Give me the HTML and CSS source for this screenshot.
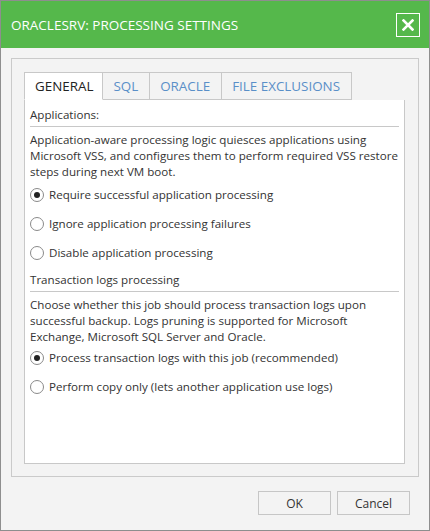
FILE: index.html
```html
<!DOCTYPE html>
<html>
<head>
<meta charset="utf-8">
<link rel="stylesheet" href="styles.css">
</head>
<body>
<div class="window">
  <div class="titlebar">
    <span class="title">ORACLESRV: PROCESSING SETTINGS</span>
    <span class="close">
      <svg width="12" height="12" viewBox="0 0 12 12"><path d="M1.5 1.5 L10.5 10.5 M10.5 1.5 L1.5 10.5" stroke="#fff" stroke-width="2.6" stroke-linecap="square"/></svg>
    </span>
  </div>
  <div class="content">
    <div class="group">
      <div class="tabs">
        <div class="tab active">GENERAL</div>
        <div class="tab">SQL</div>
        <div class="tab">ORACLE</div>
        <div class="tab">FILE EXCLUSIONS</div>
      </div>
      <div class="panel">
        <div class="section-title">Applications:</div>
        <p class="desc">Application-aware processing logic quiesces applications using<br>Microsoft VSS, and configures them to perform required VSS restore<br>steps during next VM boot.</p>
        <div class="radio checked"><span class="dot"></span>Require successful application processing</div>
        <div class="radio"><span class="dot"></span>Ignore application processing failures</div>
        <div class="radio"><span class="dot"></span>Disable application processing</div>
        <div class="section-title second">Transaction logs processing</div>
        <p class="desc desc2">Choose whether this job should process transaction logs upon<br>successful backup. Logs pruning is supported for Microsoft<br>Exchange, Microsoft SQL Server and Oracle.</p>
        <div class="radio checked"><span class="dot"></span>Process transaction logs with this job (recommended)</div>
        <div class="radio"><span class="dot"></span>Perform copy only (lets another application use logs)</div>
      </div>
    </div>
    <div class="buttons">
      <button class="btn">OK</button>
      <button class="btn">Cancel</button>
    </div>
  </div>
</div>
</body>
</html>
```

FILE: styles.css
```css
* { box-sizing: border-box; }
html, body { margin: 0; padding: 0; background: #fff; }
body { font-family: "Open Sans", "DejaVu Sans", sans-serif; font-size: 11.6px; color: #333; }
.window {
  width: 430px; height: 531px;
  border: 1px solid #8e8e8e;
  background: #f3f3f3;
  display: flex; flex-direction: column;
}
.titlebar {
  height: 47px; background: #55b84b;
  display: flex; align-items: center; justify-content: space-between;
  padding: 0 9px 0 10px;
}
.title { color: #fff; font-size: 13.5px; }
.close {
  width: 24px; height: 24px; border: 1px solid #fff;
  display: flex; align-items: center; justify-content: center;
}
.close svg { display: block; }
.content { flex: 1; padding: 10px 10px 0 10px; display: flex; flex-direction: column; }
.group {
  height: 419px;
  border: 1px solid #cacaca;
  padding: 13px 13px 12px 12px;
  display: flex; flex-direction: column;
}
.tabs { display: flex; height: 28px; }
.tab {
  height: 28px; padding: 0 11px 0 10px;
  border: 1px solid #c8c8c8; border-left: none;
  background: #f3f3f3; color: #5a8fc8;
  font-size: 13.4px; line-height: 27px;
}
.tab.active {
  border-left: 1px solid #c8c8c8;
  background: #fff; color: #222;
  border-bottom-color: #fff;
  padding: 0 9px 0 10px;
}
.panel {
  flex: 1; background: #fff;
  border: 1px solid #c8c8c8; border-top: none;
  padding: 6px 5px 0 5px;
}
.section-title {
  line-height: 18px; padding-bottom: 2px;
  border-bottom: 1px solid #c8c8c8;
}
.section-title.second { margin-top: 4px; }
.desc { margin: 5px 0 0 0; line-height: 16px; white-space: nowrap; }
.desc2 { margin-bottom: -2px; }
.radio {
  display: flex; align-items: center; height: 29px;
}
.dot {
  width: 14px; height: 14px; border-radius: 50%;
  border: 1px solid #8a8a8a; background: #fff;
  margin-right: 5px; position: relative; flex: none;
}
.radio.checked .dot::after {
  content: ""; position: absolute; left: 3px; top: 3px;
  width: 6px; height: 6px; border-radius: 50%; background: #222;
}
.buttons {
  display: flex; justify-content: flex-end; gap: 6px;
  padding: 14px 9px 0 0;
}
.btn {
  width: 73px; height: 24px;
  border: 1px solid #c6c6c6; background: #f3f3f3;
  font-family: "Open Sans", "DejaVu Sans", sans-serif; font-size: 12px; color: #333;
  padding: 0;
}
```
